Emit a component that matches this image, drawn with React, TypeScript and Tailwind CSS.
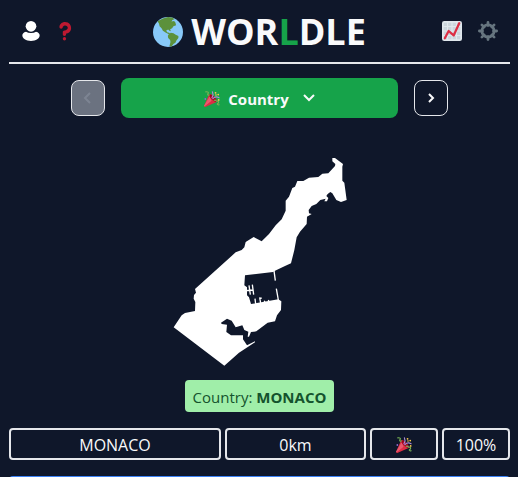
import React from "react";

type IconProps = { className?: string };

function Globe({ className }: IconProps) {
  return (
    <svg viewBox="0 0 91 91" className={className} aria-hidden="true">
      <circle cx="45.5" cy="45.5" r="45.5" fill="#88c9f9" />
      <path
        fill="#5c913b"
        d="M14 13Q30 2 46 0L60 2 65 7 59 9 56 14 64 12 68 17 70 25 62 28 58 34 52 37 54 43 50 42 46 38 40 41 43 46 49 48 53 52 48 52 38 47 30 42 26 34 20 28 18 20Q15 15 14 13ZM48 52 54 48 62 49 69 54 77 58 77 64 71 71 68 78 62 82 56 90 50 88 53 76 52 70 46 64 45 57Z"
      />
    </svg>
  );
}

function Person({ className }: IconProps) {
  return (
    <svg viewBox="0 0 54 60" className={className} fill="#fff" aria-hidden="true">
      <circle cx="27" cy="16" r="16" />
      <path d="M12 32Q18 36 27 36T42 32Q53 35 53 43C53 53 42 60 27 60S1 53 1 43Q1 35 12 32Z" />
    </svg>
  );
}

function Question({ className }: IconProps) {
  return (
    <svg viewBox="0 0 36 36" className={className} fill="#be1931" aria-hidden="true">
      <path d="M17 27c-1.657 0-3-1.343-3-3v-4c0-1.657 1.343-3 3-3 .603-.006 6-1 6-5 0-2-2-4-5-4-2.441 0-4 2-4 3 0 1.657-1.343 3-3 3s-3-1.343-3-3c0-4.878 4.58-9 10-9 8 0 11 5.982 11 11 0 4.145-2.277 7.313-6.413 8.92-.9.351-1.79.587-2.587.747V24c0 1.657-1.343 3-3 3z" />
      <circle cx="17" cy="32" r="3" />
    </svg>
  );
}

function Chart({ className }: IconProps) {
  return (
    <svg viewBox="0 0 36 36" className={className} aria-hidden="true">
      <rect width="36" height="36" rx="4" fill="#e1e8ed" />
      <path
        fill="#ccd6dd"
        d="M3 3h6v6H3zM11 3h6v6h-6zM19 3h6v6h-6zM27 3h6v6h-6zM3 11h6v6H3zM11 11h6v6h-6zM19 11h6v6h-6zM27 11h6v6h-6zM3 19h6v6H3zM11 19h6v6h-6zM19 19h6v6h-6zM27 19h6v6h-6zM3 27h6v6H3zM11 27h6v6h-6zM19 27h6v6h-6zM27 27h6v6h-6z"
      />
      <path d="M5 31L12 18 21 26 31 4" fill="none" stroke="#dd2e44" strokeWidth="4" strokeLinecap="round" strokeLinejoin="round" />
    </svg>
  );
}

function Gear({ className }: IconProps) {
  return (
    <svg viewBox="0 0 36 36" className={className} aria-hidden="true">
      <g stroke="#66757f" strokeWidth="5" strokeLinecap="round">
        <path d="M18 2.500V8M18 28v5.500M2.500 18H8M28 18h5.500M7 7l4 4M25 25l4 4M7 29l4-4M25 11l4-4" />
      </g>
      <circle cx="18" cy="18" r="11" fill="none" stroke="#66757f" strokeWidth="5" />
    </svg>
  );
}

function Popper({ className }: IconProps) {
  return (
    <svg viewBox="0 0 36 36" className={className} aria-hidden="true">
      <path
        fill="#dd2e44"
        d="M11.626 7.488c-.112.112-.197.247-.268.395l-.008-.008L.134 33.141l.011.011c-.208.403.14 1.223.853 1.937.713.713 1.533 1.061 1.936.853l.01.01L28.21 24.735l-.008-.009c.147-.07.282-.155.395-.269 1.562-1.562-.971-6.627-5.656-11.313-4.687-4.686-9.752-7.218-11.315-5.656z"
      />
      <path fill="#ea596e" d="M13 12L.4 32.600.1 33.200C0 34 .6 34.700 1 35.100L17 22Z" />
      <path fill="#a0041e" d="M23 13c4.600 4.600 7.100 9.600 5.600 11.200-1.500 1.500-6.600-1-11.200-5.600S10.300 9 11.800 7.500 18.400 8.400 23 13z" />
      <g fill="none" strokeWidth="2.600" strokeLinecap="round">
        <path stroke="#aa8dd8" d="M18 15c2-3 4-7 1-13M20 17c3-3 8-5 14-2" />
        <path stroke="#77b255" d="M4 2c5-1 7 1 5 4s1 4 3 3M23 21c5-2 4 3 7 2s4 3 1 5 1 4 3 3" />
      </g>
      <g fill="#ffcc4d">
        <circle cx="26" cy="4" r="2" />
        <circle cx="32" cy="8" r="2" />
        <circle cx="27" cy="9" r="1.800" />
        <circle cx="33" cy="20" r="2" />
      </g>
      <circle cx="3" cy="18" r="2" fill="#9266cc" />
    </svg>
  );
}

function Chevron({ d, className }: { d: string; className?: string }) {
  return (
    <svg viewBox="0 0 12 12" className={className} fill="none" stroke="currentColor" strokeWidth="2" aria-hidden="true">
      <path d={d} />
    </svg>
  );
}

function MonacoShape() {
  return (
    <svg viewBox="0 0 534 648" className="mt-9 h-[216px] w-[178px]" role="img" aria-label="Country outline">
      <path
        fill="#fff"
        d="M484 12L492 12 516 30 514 38 514 80 520 86 527 138 510 144 496 138 484 118 478 114 470 120 466 126 472 132 468 142 460 142 464 134 448 138 436 150 422 156 413 168 414 178 422 180 408 188 407 210 387 233 377 250 370 288 360 328 342 336 312 350 306 354 222 364 220 394 228 400 228 424 234 430 240 450 322 436 331 442 330 468 318 484 312 502 290 506 256 532 240 534 234 548 230 548 232 533 220 528 214 514 194 520 182 500 168 494 150 506 152 510 168 512 166 534 180 544 216 544 216 556 228 574 252 562 252 565 204 596 160 635 8 520 32 484 42 477 72 471 73 444 68 434 69 423 75 416 72 405 194 295 212 288 220 280 224 264 248 249 272 262 294 240 314 214 332 196 344 170 344 140 354 128 364 102 372 98 379 81 397 81 414 71 442 69 454 59 472 58 492 36 493 30 484 22Z"
      />
      <path
        fill="none"
        stroke="#fff"
        strokeWidth="4"
        d="M309 350L313 380M316 404L322 438M234 394L238 422M244 392L248 422M224 410L246 408M252 434L254 450M266 430L269 448M266 434L272 432M280 440L282 446M292 438L294 444"
      />
    </svg>
  );
}

const cell = "flex h-8 items-center justify-center rounded border-2 border-gray-200 pt-0.5";

export default function App() {
  return (
    <div className="min-h-screen bg-[#0f172a] pr-2 pl-[9px] font-['Open_Sans','Noto_Sans',sans-serif] text-base text-gray-50">
      <header className="flex h-16 items-center border-b-2 border-gray-200">
        <div className="flex flex-1 items-center gap-3.5 pl-3">
          <button type="button" aria-label="Profile">
            <Person className="h-5 w-5" />
          </button>
          <button type="button" aria-label="How to play">
            <Question className="h-5 w-5" />
          </button>
        </div>
        <h1 className="flex items-center gap-2 pt-0.5 text-4xl font-bold">
          <Globe className="h-[30px] w-[30px]" />
          <span>
            WOR<span className="text-[#16a34a]">L</span>DLE
          </span>
        </h1>
        <div className="flex flex-1 items-center justify-end gap-4 pr-3">
          <button type="button" aria-label="Statistics">
            <Chart className="h-5 w-5" />
          </button>
          <button type="button" aria-label="Settings">
            <Gear className="h-5 w-5" />
          </button>
        </div>
      </header>

      <main className="flex flex-col items-center">
        <nav className="mt-3.5 flex w-full items-center justify-center gap-4">
          <button
            type="button"
            disabled
            aria-label="Previous round"
            className="flex h-9 w-[34px] items-center justify-center rounded-lg border border-gray-200 bg-[#6b7280] text-gray-400"
          >
            <Chevron d="M8 1L3 6 8 11" className="h-3 w-3 opacity-40" />
          </button>
          <button
            type="button"
            className="flex h-10 w-[277px] items-center justify-center rounded-lg bg-[#16a34a] pt-0.5 text-[15px] font-bold"
          >
            <Popper className="mr-2 h-4 w-4" />
            Country
            <Chevron d="M1 2L6 7 11 2" className="ml-3.5 h-3 w-3" />
          </button>
          <button
            type="button"
            aria-label="Next round"
            className="flex h-9 w-[34px] items-center justify-center rounded-lg border border-gray-200"
          >
            <Chevron d="M4 2L8 6 4 10" className="h-3 w-3" />
          </button>
        </nav>

        <MonacoShape />

        <p className="mt-2.5 flex h-8 items-center rounded bg-[#a0eea9] px-2 pt-0.5 text-[15px] whitespace-pre text-[#14532d]">
          Country: <strong>MONACO</strong>
        </p>

        <div className="mt-4 grid w-full grid-cols-[212fr_141fr_68fr_68fr] gap-1">
          <div className={cell}>MONACO</div>
          <div className={cell}>0km</div>
          <div className={cell}>
            <Popper className="h-4 w-4" />
          </div>
          <div className={cell}>100%</div>
        </div>

        <button type="button" aria-label="Next" className="mt-4 h-10 w-full rounded bg-[#3b82f6]" />
      </main>
    </div>
  );
}
